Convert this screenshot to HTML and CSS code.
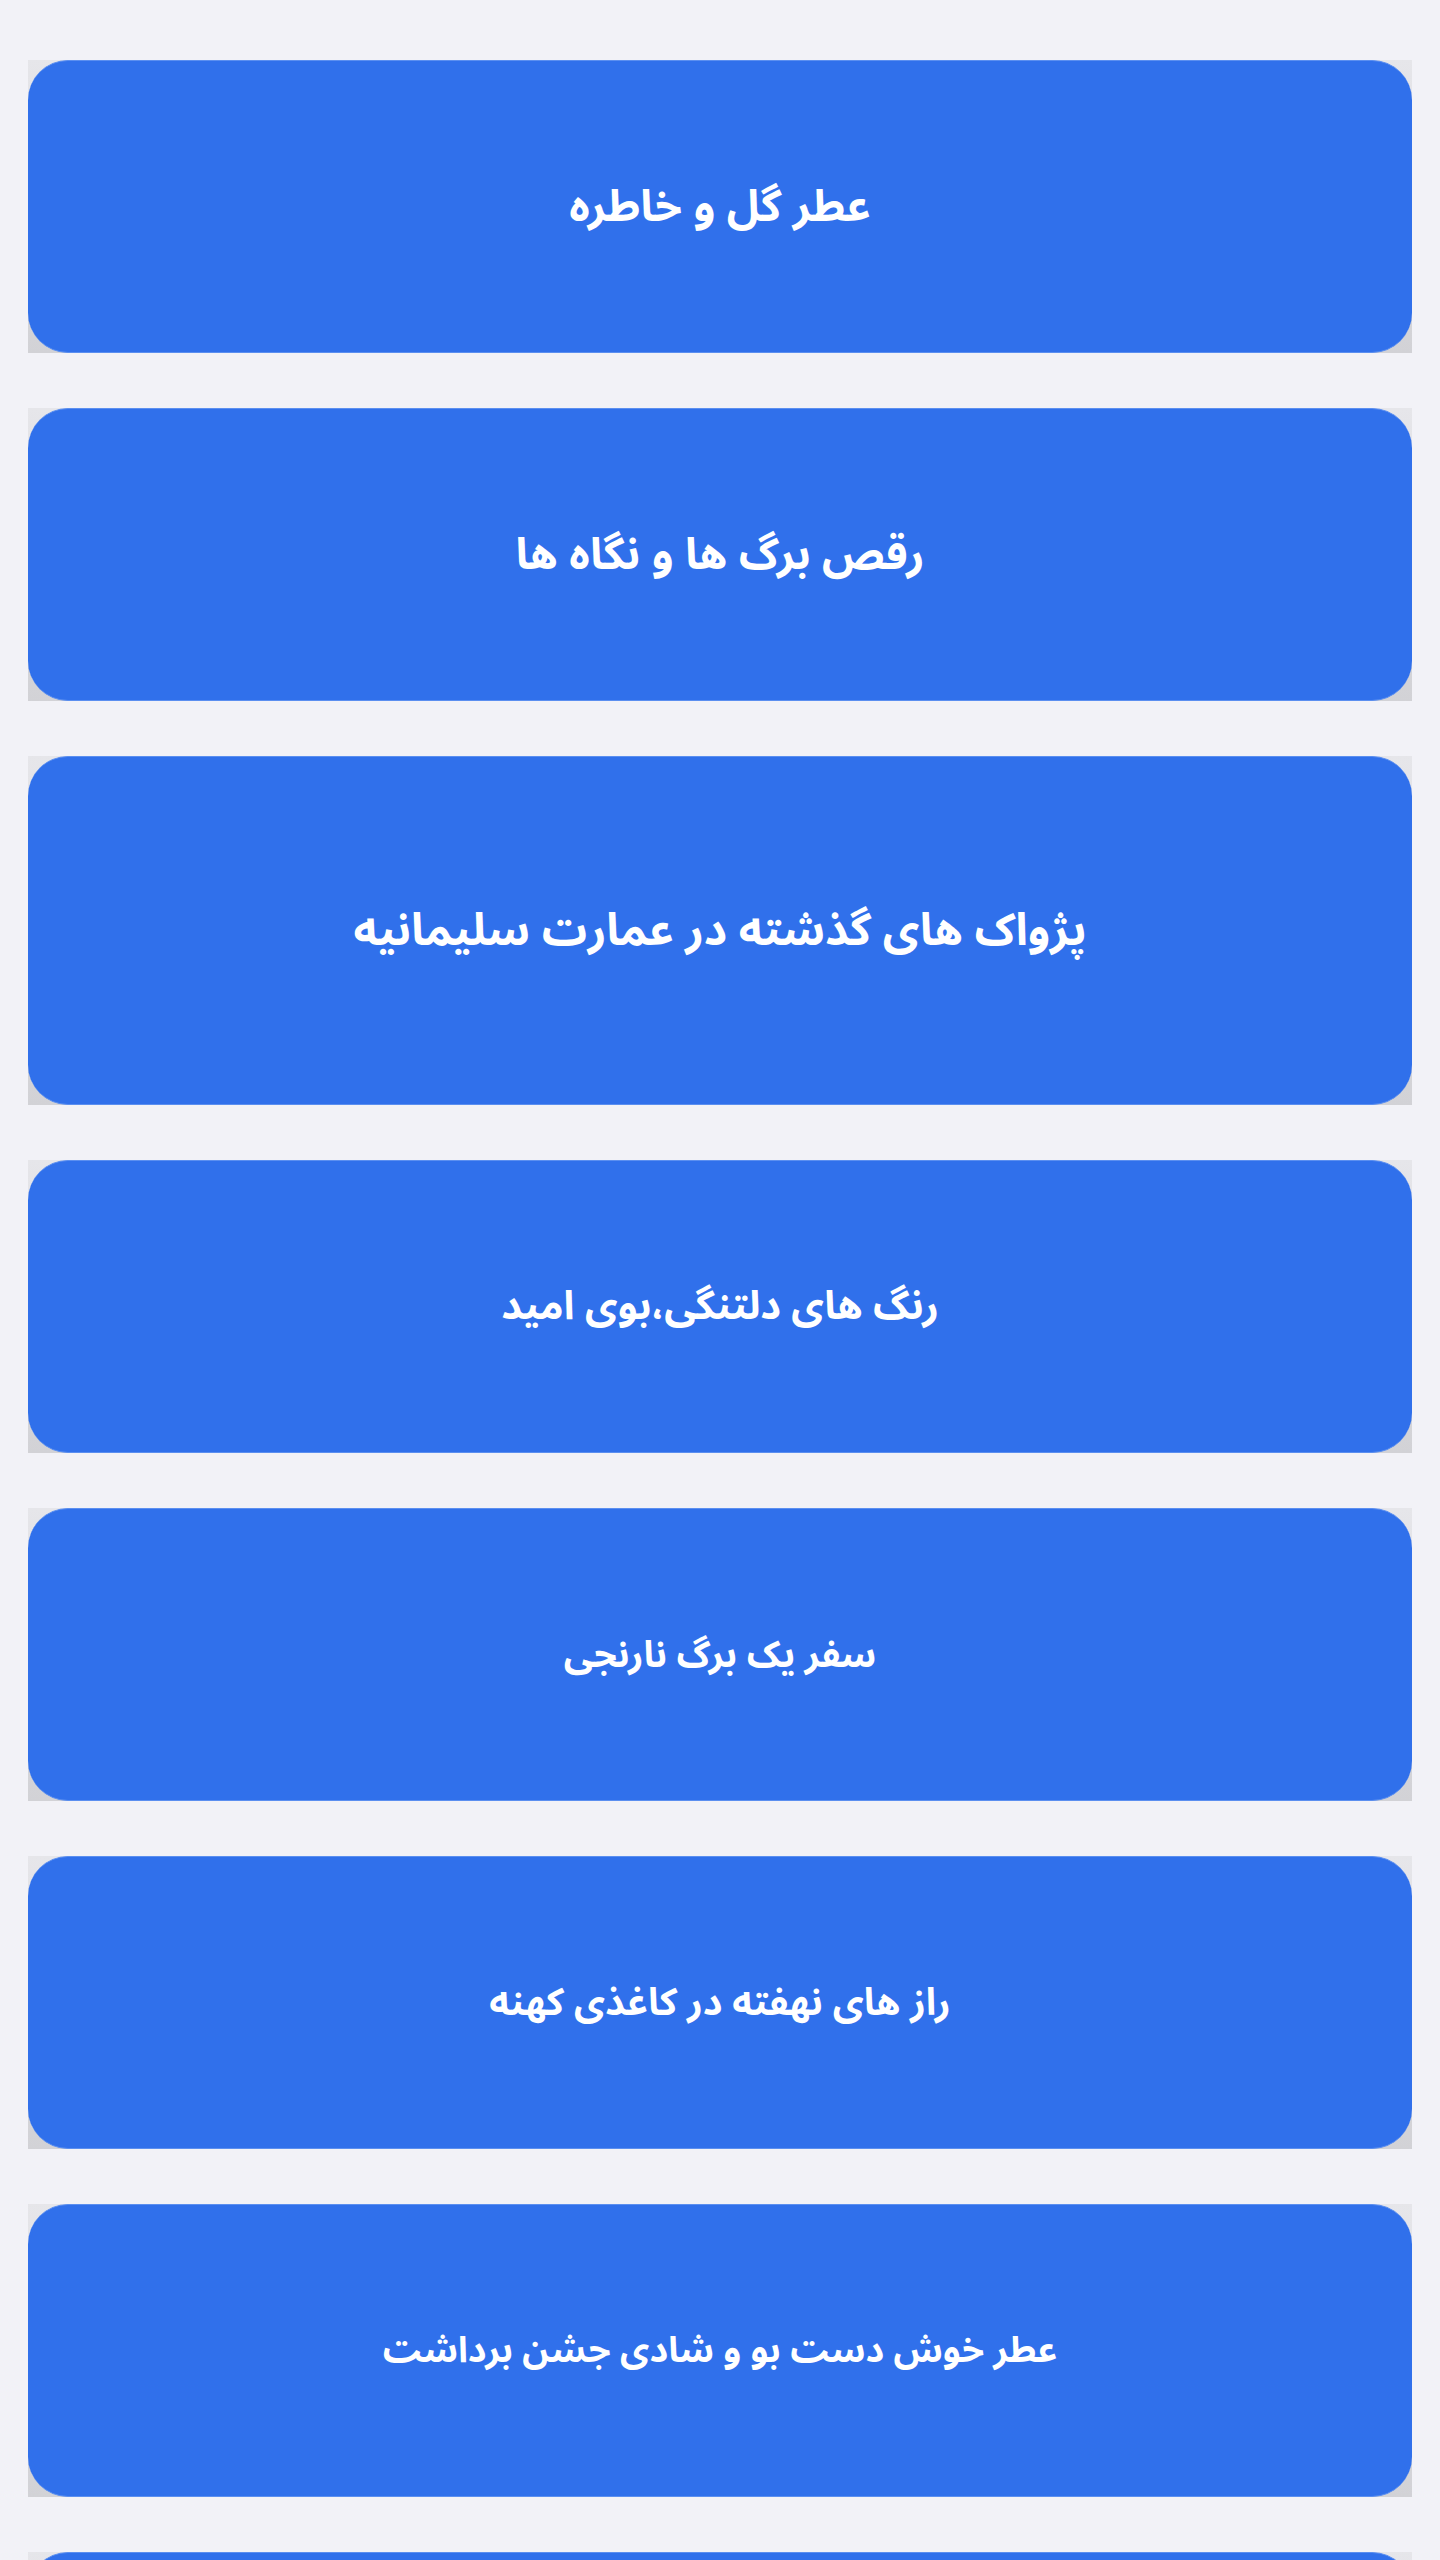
FILE: index.html
```html
<!DOCTYPE html>
<html lang="fa" dir="rtl">
<head>
  <meta charset="UTF-8">
  <meta name="viewport" content="width=device-width, initial-scale=1.0">
  <title>داستان ها</title>
  <link rel="stylesheet" href="styles.css">
</head>
<body>
  <div class="story-list">
    <div class="story-item">
      <a class="story-card size-44" href="#">عطر گل و خاطره</a>
    </div>
    <div class="story-item">
      <a class="story-card size-44" href="#">رقص برگ ها و نگاه ها</a>
    </div>
    <div class="story-item">
      <a class="story-card story-card-tall size-45" href="#">پژواک های گذشته در عمارت سلیمانیه</a>
    </div>
    <div class="story-item">
      <a class="story-card size-40" href="#">رنگ های دلتنگی،بوی امید</a>
    </div>
    <div class="story-item">
      <a class="story-card size-37" href="#">سفر یک برگ نارنجی</a>
    </div>
    <div class="story-item">
      <a class="story-card size-38" href="#">راز های نهفته در کاغذی کهنه</a>
    </div>
    <div class="story-item">
      <a class="story-card size-36" href="#">عطر خوش دست بو و شادی جشن برداشت</a>
    </div>
    <div class="story-item">
      <a class="story-card" href="#">&nbsp;</a>
    </div>
  </div>
</body>
</html>
```

FILE: styles.css
```css
:root {
  --bg: #f2f2f7;
  --card: #3070eb;
  --card-edge: #5b8ff0;
  --shade-top: #e6e6ea;
  --shade-bottom: #d2d2d6;
  --text: #ffffff;
}

* {
  margin: 0;
  padding: 0;
  box-sizing: border-box;
}

body {
  background: var(--bg);
  font-family: "Noto Sans Arabic", "Vazirmatn", "DejaVu Sans", sans-serif;
}

.story-list {
  display: flex;
  flex-direction: column;
  gap: 55px;
  padding: 60px 28px;
}

/* square shaded box that shows behind the rounded corners */
.story-item {
  background: linear-gradient(to bottom, var(--shade-top), var(--shade-bottom));
}

.story-card {
  display: flex;
  align-items: center;
  justify-content: center;
  height: 293px;
  padding: 0 60px;
  border-radius: 40px;
  background: var(--card);
  border-top: 1px solid var(--card-edge);
  border-bottom: 1px solid var(--card-edge);
  color: var(--text);
  text-decoration: none;
  text-align: center;
  font-size: 38px;
  font-weight: 700;
}

.story-card-tall {
  height: 349px;
}

/* titles are sized one by one in the app */
.size-45 { font-size: 45px; }
.size-44 { font-size: 44px; }
.size-40 { font-size: 40px; }
.size-38 { font-size: 38px; }
.size-37 { font-size: 37px; }
.size-36 { font-size: 36px; }
```
